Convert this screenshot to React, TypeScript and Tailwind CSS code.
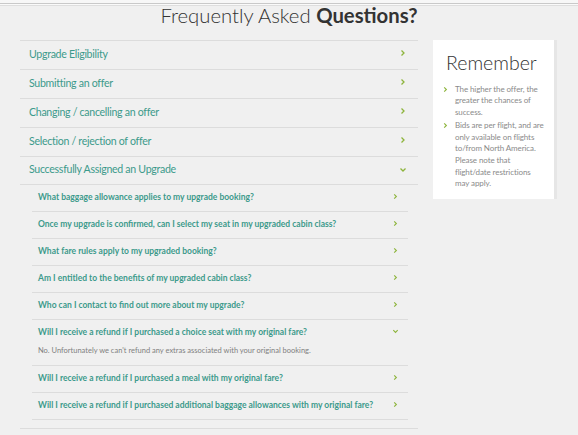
import React from 'react';

const mainItems = [
  'Upgrade Eligibility',
  'Submitting an offer',
  'Changing / cancelling an offer',
  'Selection / rejection of offer',
];

const subItems: { q: string; a?: string }[] = [
  { q: 'What baggage allowance applies to my upgrade booking?' },
  { q: 'Once my upgrade is confirmed, can I select my seat in my upgraded cabin class?' },
  { q: 'What fare rules apply to my upgraded booking?' },
  { q: 'Am I entitled to the benefits of my upgraded cabin class?' },
  { q: 'Who can I contact to find out more about my upgrade?' },
  {
    q: 'Will I receive a refund if I purchased a choice seat with my original fare?',
    a: "No. Unfortunately we can't refund any extras associated with your original booking.",
  },
  { q: 'Will I receive a refund if I purchased a meal with my original fare?' },
  { q: 'Will I receive a refund if I purchased additional baggage allowances with my original fare?' },
];

// line breaks follow the reference's wrapping
const tips = [
  ['The higher the offer, the', 'greater the chances of', 'success.'],
  [
    'Bids are per flight, and are',
    'only available on flights',
    'to/from North America.',
    'Please note that',
    'flight/date restrictions',
    'may apply.',
  ],
];

function Chevron({ open = false, small = false }: { open?: boolean; small?: boolean }) {
  const s = small ? 7 : 8;
  return (
    <svg width={s} height={s} viewBox="0 0 8 8" className="shrink-0">
      {open ? (
        <polyline points="1.5,2.5 4,5 6.5,2.5" fill="none" stroke="#8db43c" strokeWidth={1.3} />
      ) : (
        <polyline points="2.5,1.5 5,4 2.5,6.5" fill="none" stroke="#8db43c" strokeWidth={1.3} />
      )}
    </svg>
  );
}

export default function App() {
  return (
    <div
      className="w-[578px] h-[435px] overflow-hidden bg-[#f0f0f0]"
      style={{ fontFamily: 'Lato, "Noto Sans", sans-serif' }}
    >
      <div className="h-[4px] bg-[#f7f7f7] border-b border-[#c9c9c9]" />
      <div className="h-[2px] bg-[#fafafa] border-b border-[#dedede]" />

      <div className="h-[34px] overflow-hidden">
        <h1 className="text-center text-[20.3px] leading-none -mt-[1px] text-[#333] font-light">
          Frequently Asked <span className="font-bold">Questions?</span>
        </h1>
      </div>

      <div className="flex items-start gap-[15px] pl-[20px]">
        <div className="w-[398px] border-t border-[#dcdcdc]">
          {mainItems.map((t) => (
            <div key={t} className="h-[29px] flex items-center justify-between pl-[9px] pr-[11px] border-b border-[#dcdcdc]">
              <span className="text-[10.6px] tracking-[-0.3px] text-[#3c9a8b] -mt-[1px]">{t}</span>
              <div className="-mt-[4px]">
                <Chevron />
              </div>
            </div>
          ))}

          <div className="border-b border-[#dcdcdc] pb-[8px]">
            <div className="h-[28px] flex items-center justify-between pl-[9px] pr-[11px] border-b border-[#dcdcdc]">
              <span className="text-[10.6px] tracking-[-0.3px] text-[#3c9a8b] -mt-[1px]">Successfully Assigned an Upgrade</span>
              <div className="-mt-[2px]">
                <Chevron open />
              </div>
            </div>
            <div className="ml-[12px] mr-[10px]">
              {subItems.map((s) => (
                <div key={s.q} className="border-b border-[#dcdcdc] pl-[6px] pr-[9px]">
                  <div className="h-[26px] flex items-center justify-between">
                    <span className="text-[8.5px] font-bold text-[#3c9a8b] -mt-[1px] whitespace-nowrap">{s.q}</span>
                    <div className="-mt-[4px]">
                      <Chevron small open={!!s.a} />
                    </div>
                  </div>
                  {s.a && (
                    <p className="text-[7.5px] text-[#808080] -mt-[2px] pb-[8px] leading-[13px]">{s.a}</p>
                  )}
                </div>
              ))}
            </div>
          </div>
        </div>

        <div className="w-[121px] h-[159px] bg-white pl-[9px] pr-[4px] pt-[13px] shadow-[3px_0_0_#e6e6e6]">
          <div className="text-[19.5px] leading-none text-[#333] font-light pl-[4px]">Remember</div>
          <ul className="mt-[11px] space-y-[2px]">
            {tips.map((lines, i) => (
              <li key={i} className="flex gap-[6px]">
                <div className="pt-[2px]">
                  <Chevron small />
                </div>
                <div className="text-[8px] leading-[11.6px] tracking-[-0.1px] text-[#8a8a8a]">
                  {lines.map((l) => (
                    <div key={l} className="whitespace-nowrap">{l}</div>
                  ))}
                </div>
              </li>
            ))}
          </ul>
        </div>
      </div>
    </div>
  );
}
